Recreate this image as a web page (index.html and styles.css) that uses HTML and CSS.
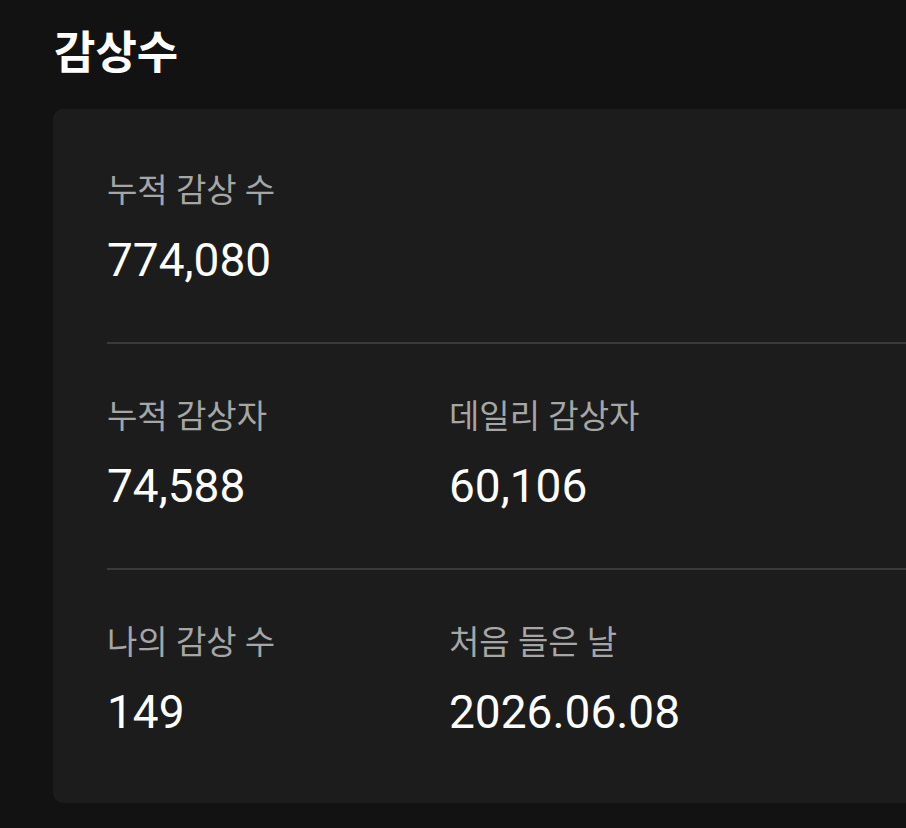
FILE: index.html
```html
<!DOCTYPE html>
<html lang="ko">
<head>
<meta charset="utf-8">
<link rel="stylesheet" href="styles.css">
</head>
<body>
<div class="page">
  <h1 class="title">감상수</h1>
  <div class="card">
    <div class="row">
      <div class="stat">
        <div class="label">누적 감상 수</div>
        <div class="value">774,080</div>
      </div>
    </div>
    <div class="row">
      <div class="stat">
        <div class="label">누적 감상자</div>
        <div class="value">74,588</div>
      </div>
      <div class="stat">
        <div class="label">데일리 감상자</div>
        <div class="value">60,106</div>
      </div>
    </div>
    <div class="row last">
      <div class="stat">
        <div class="label">나의 감상 수</div>
        <div class="value">149</div>
      </div>
      <div class="stat">
        <div class="label">처음 들은 날</div>
        <div class="value">2026.06.08</div>
      </div>
    </div>
  </div>
</div>
</body>
</html>
```
FILE: styles.css
```css
html, body {
  margin: 0;
  padding: 0;
  background: #121212;
  overflow: hidden;
}
body {
  font-family: Roboto, "Noto Sans CJK KR", sans-serif;
  color: #ffffff;
  width: 906px;
  height: 828px;
}
.page {
  width: 1100px;
  padding-left: 53px;
}
.title {
  margin: 0;
  padding: 24px 0 0 1px;
  height: 109px;
  box-sizing: border-box;
  font-size: 45px;
  font-weight: 700;
  line-height: 60px;
}
.card {
  width: 1000px;
  background: #1c1c1c;
  border-radius: 10px;
  padding: 58px 0 59px 54px;
  box-sizing: border-box;
}
.row {
  display: grid;
  grid-template-columns: 342px 1fr;
  padding: 0 0 50px 0;
  margin-bottom: 49px;
  border-bottom: 2px solid #3a3a3a;
}
.row.last {
  border-bottom: none;
  padding-bottom: 0;
  margin-bottom: 0;
}
.label {
  font-size: 33px;
  line-height: 48px;
  color: #a6a6a6;
}
.value {
  font-size: 46px;
  line-height: 64px;
  margin-top: 13px;
  color: #ffffff;
}
```
